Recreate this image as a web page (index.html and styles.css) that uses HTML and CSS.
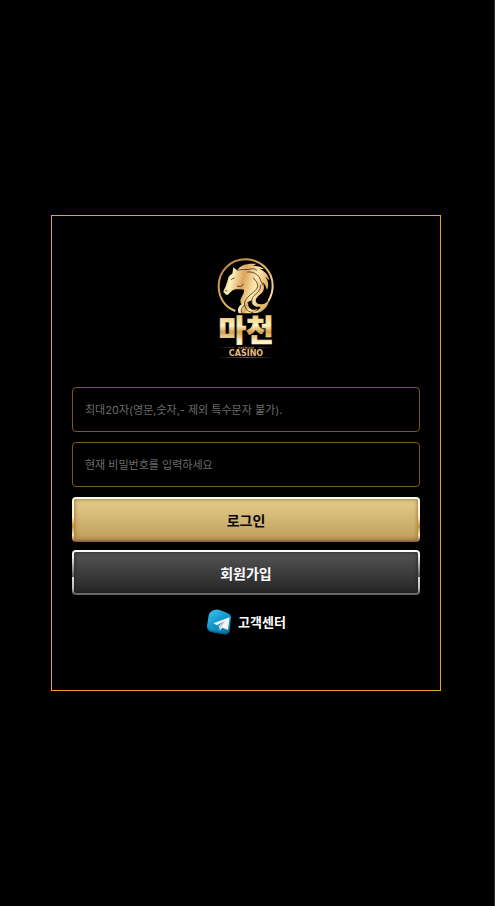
FILE: index.html
```html
<!DOCTYPE html>
<html lang="ko">
<head>
<meta charset="utf-8">
<meta name="viewport" content="width=device-width, initial-scale=1">
<title>마천 카지노</title>
<link rel="stylesheet" href="styles.css">
</head>
<body>
<main class="page">
  <form class="panel">
    <svg class="logo" viewBox="0 0 216 330" role="img" aria-label="마천 CASINO">
      <defs>
        <linearGradient id="gold" x1="0" y1="0" x2="1" y2="0.25">
          <stop offset="0" stop-color="#e0ad64"/>
          <stop offset="0.22" stop-color="#fff0bf"/>
          <stop offset="0.48" stop-color="#dca55c"/>
          <stop offset="0.75" stop-color="#ffe9b0"/>
          <stop offset="1" stop-color="#e2b469"/>
        </linearGradient>
        <linearGradient id="ring" x1="0" y1="0" x2="1" y2="1">
          <stop offset="0" stop-color="#b97f38"/>
          <stop offset="0.35" stop-color="#d9a457"/>
          <stop offset="0.6" stop-color="#e9bd74"/>
          <stop offset="1" stop-color="#fff0bd"/>
        </linearGradient>
        <linearGradient id="word" x1="0" y1="0" x2="0" y2="1">
          <stop offset="0.2" stop-color="#f0c676"/>
          <stop offset="0.45" stop-color="#fff3bd"/>
          <stop offset="0.6" stop-color="#d5a04e"/>
          <stop offset="0.8" stop-color="#fff3c8"/>
        </linearGradient>
        <linearGradient id="rule" x1="0" y1="0" x2="1" y2="0">
          <stop offset="0" stop-color="#9b7338" stop-opacity="0"/>
          <stop offset="0.5" stop-color="#9b7338"/>
          <stop offset="1" stop-color="#9b7338" stop-opacity="0"/>
        </linearGradient>
      </defs>
      <path d="M76 183C43 171 26 142 26 108C26 62 62 28 107 28C152 28 188 63 188 107C188 124 184 138 175 153" fill="none" stroke="url(#ring)" stroke-width="6"/>
      <path d="M54 87C55 79 60 75 67 71L70 52L81 61C94 44 113 39 139 42L127 47C143 47 155 51 163 58L148 56C164 63 175 74 178 91L165 79C176 93 177 108 171 120C168 109 164 102 158 96C165 112 162 124 152 132C145 138 138 143 137 151C137 159 144 163 151 163C163 164 173 156 178 146C177 165 162 184 141 189L121 190C139 185 153 177 151 170C134 173 124 163 125 151C115 155 107 160 103 169C90 162 89 152 94 143C99 135 103 127 102 119C94 119 83 117 76 118C68 120 64 124 58 130C54 136 48 136 44 130C40 128 39 124 42 119C48 108 51 98 54 87Z" fill="url(#gold)"/>
      <path d="M86 190C78 172 93 157 115 158C111 175 129 185 143 176C139 185 128 190 112 190Z" fill="url(#gold)"/>
      <g fill="none" stroke="#150e05" stroke-width="2" stroke-linecap="round">
        <path d="M83 61C96 56 113 61 123 57C130 55 137 57 141 61"/>
        <path d="M112 66C127 64 142 71 149 84C152 93 156 97 158 105"/>
        <path d="M130 84C138 91 142 98 143 106C144 118 130 126 119 136C110 145 103 151 103 165"/>
        <path d="M151 106C154 119 142 129 132 137C126 144 124 150 126 157"/>
        <path d="M73 84L64 88M47 122L51 123M82 109Q93 113 100 104"/>
        <path d="M163 122C161 135 147 142 145 157M172 125C168 140 156 146 154 157"/>
        <path d="M96 189C90 180 97 168 105 166C105 178 116 187 128 187"/>
      </g>
      <text class="logo-name" x="108" y="272" text-anchor="middle" fill="url(#word)" stroke="url(#word)" stroke-width="2">마천</text>
      <path d="M25 292H71V294H25ZM145 292H191V294H145ZM20 321H196V323H20Z" fill="url(#rule)"/>
      <text class="logo-premium" x="108" y="296" text-anchor="middle">PREMIUM</text>
      <text class="logo-casino" x="108" y="318" text-anchor="middle">CASINO</text>
    </svg>
    <div class="fields">
      <input class="field" type="text" aria-label="아이디" placeholder="최대20자(영문,숫자,- 제외 특수문자 불가).">
      <input class="field" type="password" aria-label="비밀번호" placeholder="현재 비밀번호를 입력하세요">
    </div>
    <div class="actions">
      <button class="button button-gold" type="submit"><span>로그인</span></button>
      <button class="button button-dark" type="button"><span>회원가입</span></button>
    </div>
    <a class="support" href="#">
      <svg class="support-icon" viewBox="0 0 78 78" aria-hidden="true">
        <defs>
          <linearGradient id="tile" x1="0" y1="0" x2="0.7" y2="1">
            <stop offset="0" stop-color="#42c9ef"/>
            <stop offset="0.5" stop-color="#159bd0"/>
            <stop offset="1" stop-color="#0873a8"/>
          </linearGradient>
        </defs>
        <path d="M25 3C31 0 37 1 43 4L66 13C73 16 76 21 75 28L72 61C70 72 64 77 54 76L17 69C7 67 2 60 3 51L8 19C10 11 16 5 25 3Z" fill="url(#tile)"/>
        <path d="M4 51C6 60 11 65 19 66L55 72C65 73 70 68 73 58C72 71 65 77 54 76L17 69C8 67 3 61 4 51Z" fill="#075e91"/>
        <path d="M22 43L71 25L66 63L49 56L42 64L38 51L57 36L33 49Z" fill="#f5f3f2"/>
        <path d="M38 51L57 36L45 54L42 64Z" fill="#b8cbd5"/>
      </svg>
      <span>고객센터</span>
    </a>
  </form>
</main>
</body>
</html>
```
FILE: styles.css
```css
* {
  box-sizing: border-box;
}

body {
  margin: 0;
  background: #000;
  color: #fff;
  font-family: Inter, "Noto Sans CJK KR", sans-serif;
}

.page {
  display: flex;
  align-items: center;
  justify-content: center;
  min-height: 100vh;
  padding: 20px 2px 20px 0;
  border-right: 1px solid #2b302e;
}

.panel {
  display: flex;
  flex-direction: column;
  align-items: center;
  width: 100%;
  max-width: 390px;
  padding: 34px 20px 55px;
  border: 1px solid #e9a52b;
}

.logo {
  display: block;
  width: 72px;
  height: 110px;
}

.logo-name {
  font: 900 90px "Noto Sans CJK KR", sans-serif;
}

.logo-casino {
  fill: #e5bd78;
  font: 700 24px "DejaVu Sans", sans-serif;
}

.logo-premium {
  fill: #a77c40;
  font: 700 9px "DejaVu Sans", sans-serif;
}

.fields,
.actions {
  display: grid;
  width: 100%;
}

.fields {
  gap: 10px;
  margin-top: 27px;
}

.actions {
  gap: 8px;
  margin-top: 10px;
}

.field {
  width: 100%;
  height: 45px;
  padding: 0 12px;
  border: 1px solid #7d5817;
  border-radius: 4px;
  background: #000;
  color: #fff;
  font: inherit;
  font-size: 11px;
}

.field::placeholder {
  color: #6c6c6c;
  opacity: 1;
}

.button {
  height: 45px;
  padding: 2px;
  border: 0;
  border-radius: 4px;
  font: inherit;
  font-size: 14px;
  font-weight: 700;
  cursor: pointer;
}

.button span {
  display: flex;
  align-items: center;
  justify-content: center;
  height: 100%;
  border-radius: 2px;
}

.button-gold {
  background: linear-gradient(#fffaf0 0%, #fff0ca 45%, #d28b2b 65%, #ffe5aa 85%, #80503a 100%);
  color: #080704;
}

.button-gold span {
  background: linear-gradient(#e6cc8e, #bd9e59);
  box-shadow: inset 0 0 4px #8b6826;
}

.button-dark {
  background: linear-gradient(#fff 0%, #eee 15%, #555 60%, #ddd 61%, #bbb 85%, #666 97%);
  color: #fff;
}

.button-dark span {
  background: linear-gradient(#555, #252525);
  box-shadow: inset 0 0 4px #202020;
}

.support {
  display: flex;
  align-items: center;
  gap: 6px;
  margin-top: 14px;
  color: #fff;
  font-size: 13px;
  font-weight: 700;
  line-height: 26px;
  text-decoration: none;
}

.support-icon {
  width: 26px;
  height: 26px;
}
```
